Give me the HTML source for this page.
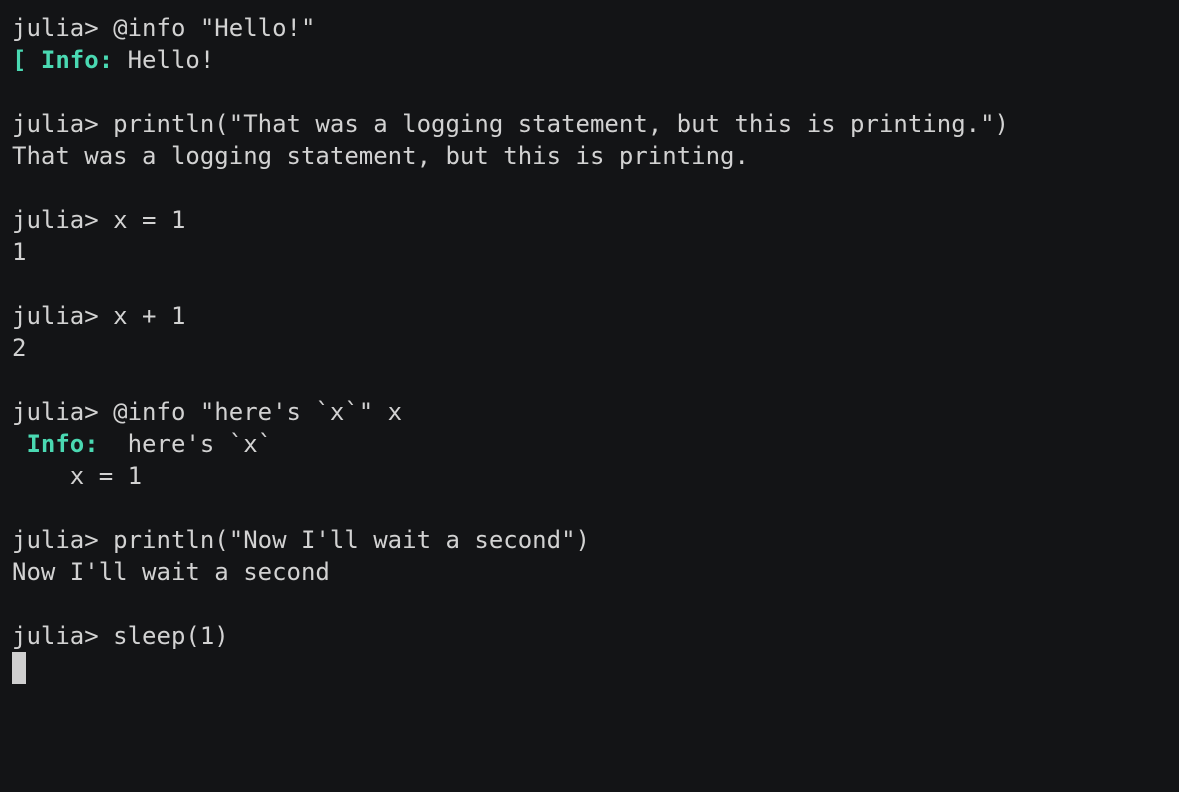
<!DOCTYPE html><html><head><style>
body{margin:0;background:#131416;width:1179px;height:792px;overflow:hidden}
pre{margin:0;position:absolute;left:12px;top:12px;font:24px/32px "DejaVu Sans Mono","Liberation Mono",monospace;color:#d2d2d2}
b{color:#4ad9b2;font-weight:bold}
.c{display:inline-block;width:14px;height:32px;background:#cfcfcf;vertical-align:top}
</style></head><body><pre>julia&gt; @info "Hello!"
<b>[ Info:</b> Hello!

julia&gt; println("That was a logging statement, but this is printing.")
That was a logging statement, but this is printing.

julia&gt; x = 1
1

julia&gt; x + 1
2

julia&gt; @info "here's `x`" x
 <b>Info:</b>  here's `x`
    x = 1

julia&gt; println("Now I'll wait a second")
Now I'll wait a second

julia&gt; sleep(1)
<span class="c"></span></pre></body></html>
